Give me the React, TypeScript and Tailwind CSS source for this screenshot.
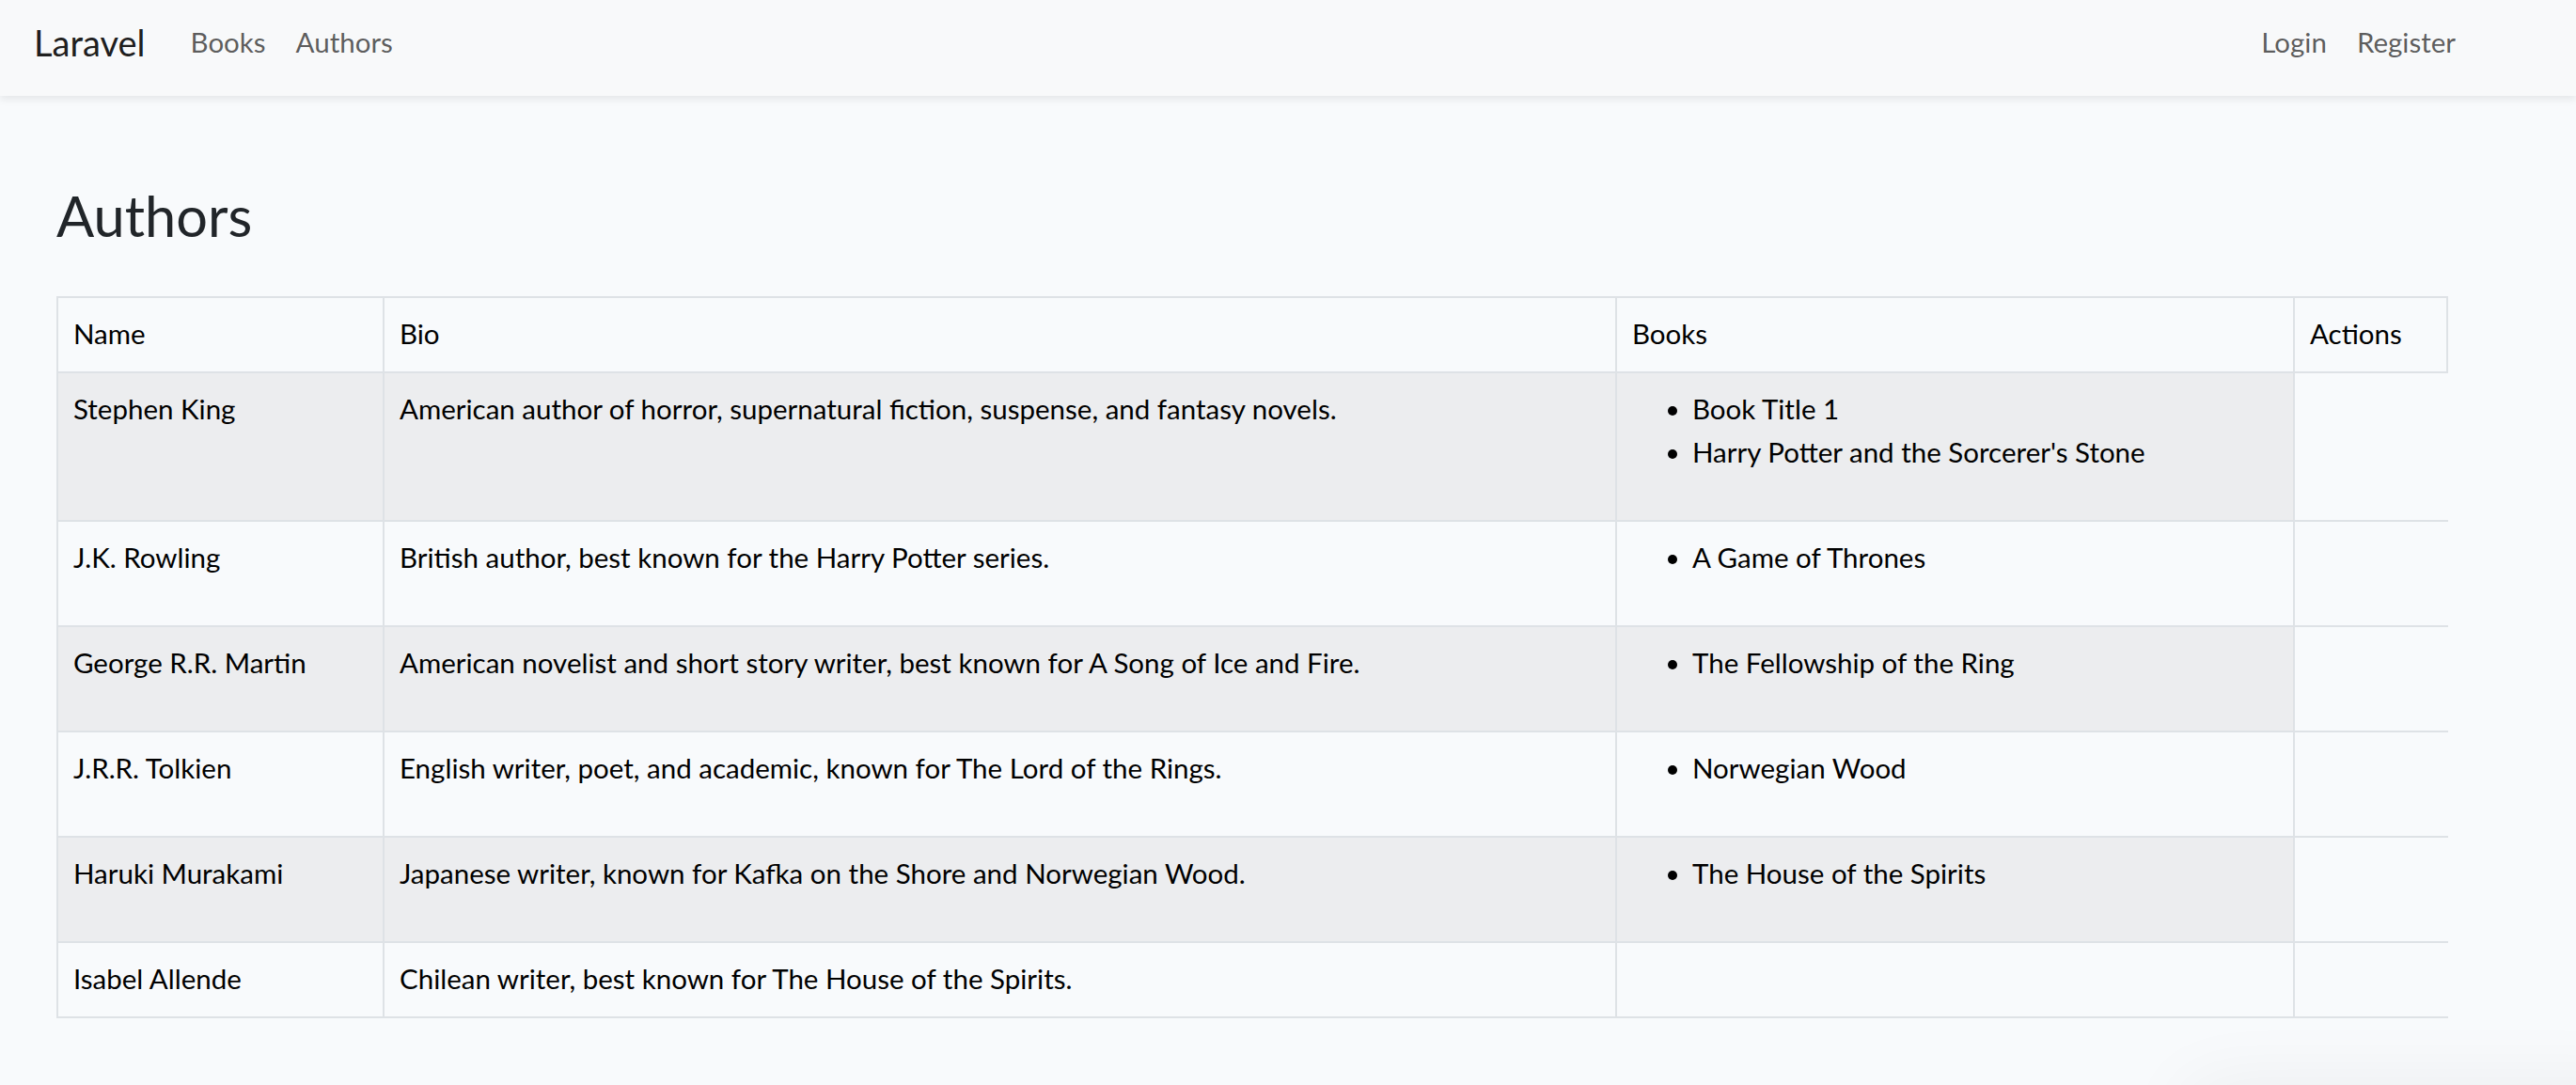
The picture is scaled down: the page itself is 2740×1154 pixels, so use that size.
import React from 'react';

const authors = [
  {
    name: 'Stephen King',
    bio: 'American author of horror, supernatural fiction, suspense, and fantasy novels.',
    books: ['Book Title 1', "Harry Potter and the Sorcerer's Stone"],
  },
  {
    name: 'J.K. Rowling',
    bio: 'British author, best known for the Harry Potter series.',
    books: ['A Game of Thrones'],
  },
  {
    name: 'George R.R. Martin',
    bio: 'American novelist and short story writer, best known for A Song of Ice and Fire.',
    books: ['The Fellowship of the Ring'],
  },
  {
    name: 'J.R.R. Tolkien',
    bio: 'English writer, poet, and academic, known for The Lord of the Rings.',
    books: ['Norwegian Wood'],
  },
  {
    name: 'Haruki Murakami',
    bio: 'Japanese writer, known for Kafka on the Shore and Norwegian Wood.',
    books: ['The House of the Spirits'],
  },
  {
    name: 'Isabel Allende',
    bio: 'Chilean writer, best known for The House of the Spirits.',
    books: [],
  },
];

export default function App() {
  return (
    <div className="min-h-screen bg-[#f8fafc] font-['Lato',sans-serif] text-[29.5px] leading-[46px] text-[#212529]">
      {/* Navbar */}
      <nav className="relative z-10 h-[102px] bg-[#f8f9fa] shadow-[0_4px_8px_rgba(0,0,0,0.075)] flex items-start justify-between pt-[22px] pl-[36px] pr-[112px]">
        <div className="flex items-start">
          <a className="text-[38px] leading-[46px] text-black/90 mr-8">Laravel</a>
          <a className="px-4 text-black/65">Books</a>
          <a className="px-4 text-black/65">Authors</a>
        </div>
        <div className="flex items-start">
          <a className="px-4 text-black/65">Login</a>
          <a className="px-4 text-black/65">Register</a>
        </div>
      </nav>

      {/* Content */}
      <main className="pl-[60px] pt-[92px] pb-[40px]">
        <h2 className="text-[59.5px] leading-[70px] font-normal mb-[51px]">Authors</h2>

        <div className="w-[2544px] text-black">
          <div className="flex border-t-2 border-b-2 border-[#dee2e6]">
            <div className="w-[347px] border-l-2 border-[#dee2e6] px-4 pt-[15px] pb-[17px]">Name</div>
            <div className="w-[1311px] border-l-2 border-[#dee2e6] px-4 pt-[15px] pb-[17px]">Bio</div>
            <div className="w-[721px] border-l-2 border-[#dee2e6] px-4 pt-[15px] pb-[17px]">Books</div>
            <div className="w-[165px] border-x-2 border-[#dee2e6] px-4 pt-[15px] pb-[17px]">Actions</div>
          </div>
          {authors.map((a, i) => {
            const bg = i % 2 === 0 ? 'bg-[#ecedef]' : '';
            return (
              <div key={a.name} className="flex border-b-2 border-[#dee2e6]">
                <div className={`w-[347px] border-l-2 border-[#dee2e6] px-4 pt-[15px] pb-[17px] ${bg}`}>{a.name}</div>
                <div className={`w-[1311px] border-l-2 border-[#dee2e6] px-4 pt-[15px] pb-[17px] ${bg}`}>{a.bio}</div>
                <div className={`w-[723px] border-x-2 border-[#dee2e6] px-4 pt-[15px] pb-[17px] ${bg}`}>
                  {a.books.length > 0 && (
                    <ul className="list-disc pl-[64px] mb-[32px]">
                      {a.books.map((b) => (
                        <li key={b}>{b}</li>
                      ))}
                    </ul>
                  )}
                </div>
              </div>
            );
          })}
        </div>
      </main>

      <div className="fixed right-[-80px] bottom-[-70px] w-[500px] h-[70px] rounded-full shadow-[0_0_80px_rgba(0,0,0,0.06)]" />
    </div>
  );
}
